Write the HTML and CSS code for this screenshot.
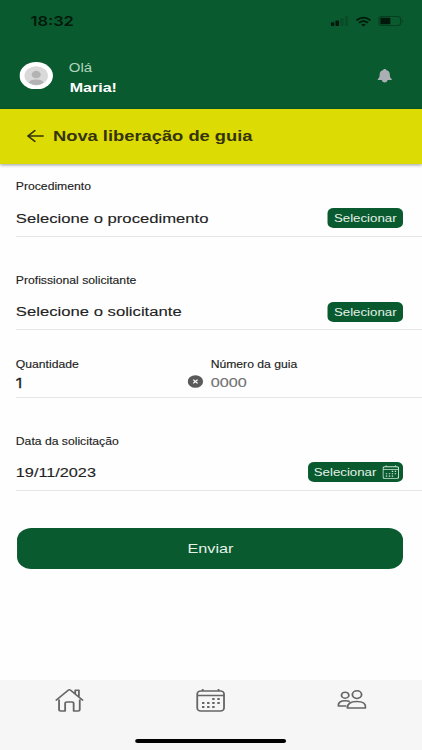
FILE: index.html
```html
<!DOCTYPE html>
<html lang="pt-BR">
<head>
<meta charset="utf-8">
<title>Nova liberação de guia</title>
<link rel="stylesheet" href="styles.css">
</head>
<body>
<svg class="defs" width="0" height="0" aria-hidden="true">
  <symbol id="calendar" viewBox="0 0 24 24">
    <rect x="1" y="3" width="22" height="20" rx="3"/>
    <path d="M1 7.600h22M5.500 1v2M18.500 1v2"/>
    <path class="dots" d="M13.300 11h2M17.500 11h2M4.900 15h2M9.100 15h2M13.300 15h2M17.500 15h2M4.900 19h2M9.100 19h2M13.300 19h2"/>
  </symbol>
</svg>
<div class="screen">
  <header class="header">
    <div class="status">
      <span class="clock">18:32</span>
      <div class="indicators">
        <svg class="signal" viewBox="0 0 16 11"><rect x="0" y="7" width="3.200" height="4" rx=".8"/><rect x="4.200" y="5" width="3.200" height="6" rx=".8"/><g opacity=".2"><rect x="8.500" y="2.500" width="3" height="8.500" rx=".8"/><rect x="12.700" y="0" width="3" height="11" rx=".8"/></g></svg>
        <svg class="wifi" viewBox="0 0 14 11"><path d="M.8 4.200Q7-1.500 13.200 4.200M3.100 6.900Q7 3.400 10.900 6.900" fill="none" stroke="#00190b" stroke-width="1.900"/><path d="M5 8.700Q7 7 9 8.700L7 10.800Z"/></svg>
        <svg class="battery" viewBox="0 0 23 11"><rect x=".5" y=".5" width="19.500" height="10" rx="2.500" fill="none" stroke="#00190b" stroke-opacity=".42"/><rect x="1.800" y="2" width="9" height="7" rx="1"/><path d="M21.200 3.800Q23 5.500 21.200 7.200Z" opacity=".5"/></svg>
      </div>
    </div>
    <div class="user">
      <svg class="avatar" viewBox="0 0 28 28"><circle cx="14" cy="14" r="14" fill="#fff"/><circle cx="14" cy="14" r="9.800" fill="#d9d9d9"/><circle cx="14" cy="12.800" r="3.800" fill="#b3b3b3"/><path d="M7.800 21Q8.600 17.800 14 17.800T20.200 21Q14 26 7.800 21Z" fill="#b3b3b3"/></svg>
      <div class="greeting"><span class="hello">Olá</span><strong class="name">Maria!</strong></div>
      <svg class="bell" viewBox="0 0 12 14"><path d="M6 0C7 0 7.200.6 7.200 1 9.500 1.700 10.200 3.500 10.200 6c0 2 .5 3 1.600 4.200V11H.2v-.8C1.300 9 1.800 8 1.800 6c0-2.500.7-4.300 3-5C4.800.6 5 0 6 0ZM3.500 11h5Q7.800 13.600 6 13.600T3.500 11Z"/></svg>
    </div>
  </header>
  <div class="titlebar">
    <svg class="back" viewBox="0 0 14 14"><path d="M7 1.300L1 7l6 5.700M1 7h13"/></svg>
    <h1>Nova liberação de guia</h1>
  </div>
  <main>
    <section class="field procedure">
      <label>Procedimento</label>
      <div class="row"><span class="value">Selecione o procedimento</span><button class="pick">Selecionar</button></div>
    </section>
    <section class="field requester">
      <label>Profissional solicitante</label>
      <div class="row"><span class="value">Selecione o solicitante</span><button class="pick">Selecionar</button></div>
    </section>
    <section class="field pair">
      <div class="quantity"><div><label>Quantidade</label><span class="value qty">1</span></div>
        <svg class="clear" viewBox="0 0 13 13"><circle cx="6.500" cy="6.500" r="6.300" fill="#5a5a5a"/><path d="M4.700 4.700l3.600 3.600M8.300 4.700l-3.600 3.600" stroke="#fff" stroke-width="1.100"/></svg></div>
      <div><label>Número da guia</label><span class="value placeholder">0000</span></div>
    </section>
    <section class="field date">
      <label>Data da solicitação</label>
      <div class="row"><span class="value day">19/11/2023</span><button class="pick wide">Selecionar<svg class="mini icon"><use href="#calendar"/></svg></button></div>
    </section>
    <button class="submit">Enviar</button>
  </main>
  <nav class="tabs">
    <svg class="icon home" viewBox="0 0 24 24"><path d="M3.500 11.500V21.500Q3.500 23 5 23H8.500V15.500Q8.500 14 10 14h4Q15.500 14 15.500 15.500V23H19Q20.500 23 20.500 21.500V11.500M.8 12.500L11 2.200Q12 1.300 13 2.200L23.200 12.500M16.800 5.500V2.200h3V8.600"/></svg>
    <svg class="icon cal"><use href="#calendar"/></svg>
    <svg class="icon people" viewBox="0 0 24 19"><circle cx="6.500" cy="5.200" r="3"/><circle cx="16.200" cy="4.600" r="3.800"/><path d="M8.300 18q0-6.600 7.700-6.600t7.300 6.600ZM7.500 15.900H.8q0-5.200 5.700-5.200 2.400 0 3.800.9"/></svg>
  </nav>
  <div class="home-bar"></div>
</div>
</body>
</html>
```

FILE: styles.css
```css
* { box-sizing: border-box; }
body {
  margin: 0;
  overflow: hidden;
  background: #fefefe;
  font-family: "Liberation Sans", Arial, sans-serif;
}
.defs { display: block; }
.screen {
  --stretch: 1.2175;
  width: calc(422px / var(--stretch));
  height: 750px;
  transform: scaleX(var(--stretch));
  transform-origin: 0 0;
  display: flex;
  flex-direction: column;
  background: #fefefe;
}
button { border: 0; padding: 0; font-family: inherit; color: #e4f2e9; background: #0a5a2f; }
.header { height: 109px; background: #0a5a2f; }
.status { height: 42px; padding: 0 14px 0 25px; display: flex; justify-content: space-between; align-items: center; }
.clock { font: 600 13.500px/16px Inter, sans-serif; color: #00190b; }
.indicators { display: flex; align-items: center; gap: 5px; fill: #00190b; }
.signal { width: 16px; height: 10px; }
.wifi { width: 13px; height: 11px; }
.battery { width: 22.500px; height: 10px; }
.user { height: 67px; padding: 0 25px 0 16px; display: flex; align-items: center; }
.avatar { width: 27.500px; height: 27.500px; }
.greeting { flex: 1; padding: 4px 0 0 13px; display: flex; flex-direction: column; }
.hello { font-size: 12.300px; line-height: 20px; color: #b2d6bf; }
.name { padding-left: .7px; font-size: 13.200px; line-height: 20px; color: #fff; }
.bell { width: 12px; height: 14px; fill: #aaafb4; }
.titlebar {
  height: 54.500px;
  padding: 0 0 1px 21.500px;
  display: flex;
  align-items: center;
  gap: 8px;
  background: #dcdb03;
  box-shadow: 0 1px 3px rgba(0, 0, 0, .4);
}
.back { width: 14px; height: 14px; fill: none; stroke: #34330b; stroke-width: 1.500; }
h1 { margin: 0; font-size: 15.050px; line-height: 20px; color: #34330b; }
main { flex: 1; }
.field { margin-left: 13px; border-bottom: 1px solid #e6e6e6; }
label { display: block; font-size: 10px; line-height: 14px; color: #222; -webkit-text-stroke: .12px #222; }
.row { display: flex; justify-content: space-between; align-items: center; height: 20px; padding-right: 15.200px; }
.value { padding-top: 1px; font-size: 13.700px; line-height: 20px; color: #222; -webkit-text-stroke: .12px currentColor; }
.pick { width: 62.800px; height: 20px; border-radius: 5px; font-size: 10.900px; line-height: 20px; }
.procedure { height: 73px; padding-top: 16px; }
.procedure .row { margin-top: 14.500px; }
.requester { height: 93.500px; padding-top: 37px; }
.requester .row { margin-top: 14px; }
.pair { height: 67.500px; padding-top: 28px; display: grid; grid-template-columns: 160px 1fr; }
.pair .value { display: block; line-height: 20px; }
.value.qty { font-family: Inter, sans-serif; font-size: 13px; -webkit-text-stroke-width: .3px; }
.quantity { display: flex; justify-content: space-between; }
.quantity .clear { width: 13px; height: 13px; margin: 17px 6px 0 0; }
.value.placeholder { font-size: 13.300px; color: #707070; }
.value.day { font-size: 13.350px; }
.date { height: 93px; padding-top: 37px; }
.date .row { margin-top: 13.500px; }
.pick.wide { width: 78.500px; padding-left: 1.500px; display: flex; align-items: center; justify-content: center; gap: 5px; }
.submit { display: block; width: 317px; height: 41.500px; margin: 37px 0 0 14.400px; border-radius: 12px; font-size: 13.300px; line-height: 42px; }
.icon { fill: none; stroke: #666; stroke-width: 1.500; stroke-linejoin: round; }
.icon .dots, .dots { stroke-width: 2; }
.mini { width: 14px; height: 14px; stroke: #cfe6d6; }
.tabs { height: 70.500px; padding: 8.500px 46px 0 45px; display: flex; justify-content: space-between; background: #f6f6f6; }
.home { width: 24px; height: 24px; }
.cal { width: 24px; height: 24px; }
.people { width: 24px; height: 19px; margin-top: 2px; }
.home-bar { position: absolute; left: 111px; top: 738.500px; width: 124px; height: 4.500px; border-radius: 3px; background: #000; }
```
